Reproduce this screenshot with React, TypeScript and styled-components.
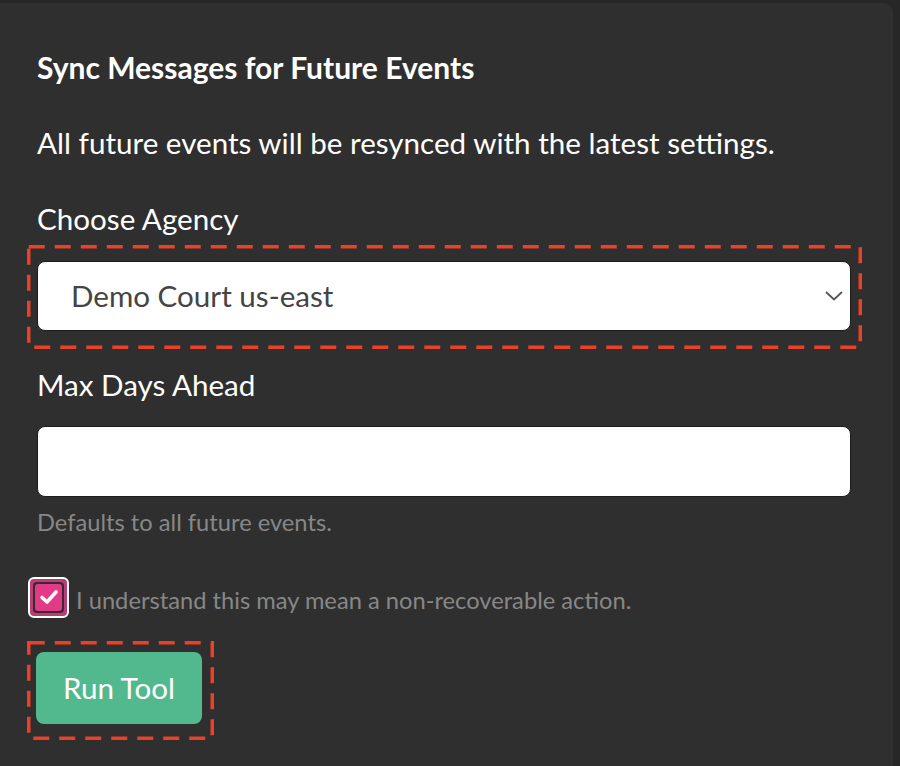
import React, { useState } from "react";
import styled, { createGlobalStyle } from "styled-components";

const GlobalStyle = createGlobalStyle`
  html, body {
    margin: 0;
    padding: 0;
    background: #272727;
    font-family: Lato, "Open Sans", sans-serif;
  }
`;

const Panel = styled.div`
  margin-top: 3px;
  width: 893px;
  height: 763px;
  box-sizing: border-box;
  background: #2f2f2f;
  border-top-right-radius: 9px;
  padding: 47px 42px 0 37px;
  color: #fff;
  display: flex;
  flex-direction: column;
  align-items: stretch;
`;

const Title = styled.h2`
  margin: 0;
  font-size: 30px;
  font-weight: 700;
  line-height: 34px;
`;

const Lead = styled.p`
  margin: 41px 0 0;
  font-size: 29.6px;
  line-height: 36px;
`;

const Label = styled.label<{ $gap: number }>`
  display: block;
  margin-top: ${({ $gap }) => $gap}px;
  font-size: 29.6px;
  line-height: 36px;
`;

const Annotated = styled.div<{ $gap: number; $inline?: boolean }>`
  position: relative;
  margin-top: ${({ $gap }) => $gap}px;
  margin-left: ${({ $inline }) => ($inline ? "-1px" : "0")};
  align-self: ${({ $inline }) => ($inline ? "flex-start" : "stretch")};
`;

const Dashes = styled.svg`
  position: absolute;
  pointer-events: none;
  overflow: visible;
`;

type Outset = { top: number; left: number; right: number; bottom: number };

const DashBox = ({ top, left, right, bottom }: Outset) => (
  <Dashes
    style={{
      top: -top,
      left: -left,
      width: `calc(100% + ${left + right}px)`,
      height: `calc(100% + ${top + bottom}px)`,
    }}
  >
    <rect
      x="1.75"
      y="1.75"
      width="calc(100% - 3.5px)"
      height="calc(100% - 3.5px)"
      fill="none"
      stroke="#ea4129"
      strokeWidth="3.5"
      strokeDasharray="16 10"
    />
  </Dashes>
);

const SelectBox = styled.div`
  height: 70px;
  box-sizing: border-box;
  background: #fff;
  border: 1px solid #1c1c1c;
  border-radius: 8px;
  display: flex;
  align-items: center;
  justify-content: space-between;
  padding: 0 7px 0 33px;
  color: #444;
  font-size: 29.6px;
`;

const TextInput = styled.input`
  display: block;
  width: 100%;
  margin-top: 22.5px;
  height: 71px;
  box-sizing: border-box;
  background: #fff;
  border: 1px solid #1c1c1c;
  border-radius: 8px;
  outline: none;
  font: inherit;
  font-size: 29.6px;
`;

const Hint = styled.div`
  margin-top: 11px;
  font-size: 23.7px;
  line-height: 28px;
  color: #878787;
`;

const CheckRow = styled.label`
  display: flex;
  align-items: center;
  gap: 7px;
  margin: 41px 0 0 -9px;
  font-size: 23.7px;
  line-height: 28px;
  color: #878787;
`;

const CheckText = styled.span`
  padding-top: 5px;
`;

const CheckBox = styled.span`
  width: 41px;
  height: 41px;
  flex-shrink: 0;
  box-sizing: border-box;
  border: 2px solid #fff;
  border-radius: 6px;
  background: #b83e73;
  padding: 3px;
  display: flex;
`;

const CheckInner = styled.span`
  flex: 1;
  background: #3a2832;
  border-radius: 4px;
  padding: 2px;
  display: flex;
`;

const CheckFill = styled.span`
  flex: 1;
  background: #e23a84;
  border-radius: 3px;
  display: flex;
  align-items: center;
  justify-content: center;
`;

const RunButton = styled.button`
  display: block;
  width: 166px;
  height: 72px;
  border: none;
  border-radius: 8px;
  background: #52b88e;
  color: #fff;
  font-family: inherit;
  font-size: 29.6px;
  cursor: pointer;
`;

export default function App() {
  const [checked, setChecked] = useState(true);
  return (
    <>
      <GlobalStyle />
      <Panel>
        <Title>Sync Messages for Future Events</Title>
        <Lead>All future events will be resynced with the latest settings.</Lead>
        <Label $gap={40}>Choose Agency</Label>
        <Annotated $gap={23.5}>
          <SelectBox>
            <span>Demo Court us-east</span>
            <svg width="18" height="10" viewBox="0 0 18 10">
              <path d="M1 1 L9 8.5 L17 1" fill="none" stroke="#555" strokeWidth="1.8" />
            </svg>
          </SelectBox>
          <DashBox top={16} left={10} right={11} bottom={18} />
        </Annotated>
        <Label $gap={36.5}>Max Days Ahead</Label>
        <TextInput />
        <Hint>Defaults to all future events.</Hint>
        <CheckRow onClick={() => setChecked((c) => !c)}>
          <CheckBox>
            <CheckInner>
              <CheckFill>
                {checked && (
                  <svg width="20" height="16" viewBox="0 0 20 16">
                    <path
                      d="M3 8.5 L8 13 L17 3"
                      fill="none"
                      stroke="#fff"
                      strokeWidth="3.6"
                      strokeLinecap="round"
                      strokeLinejoin="round"
                    />
                  </svg>
                )}
              </CheckFill>
            </CheckInner>
          </CheckBox>
          <CheckText>I understand this may mean a non-recoverable action.</CheckText>
        </CheckRow>
        <Annotated $gap={34} $inline>
          <RunButton>Run Tool</RunButton>
          <DashBox top={11} left={9} right={12} bottom={16} />
        </Annotated>
      </Panel>
    </>
  );
}
